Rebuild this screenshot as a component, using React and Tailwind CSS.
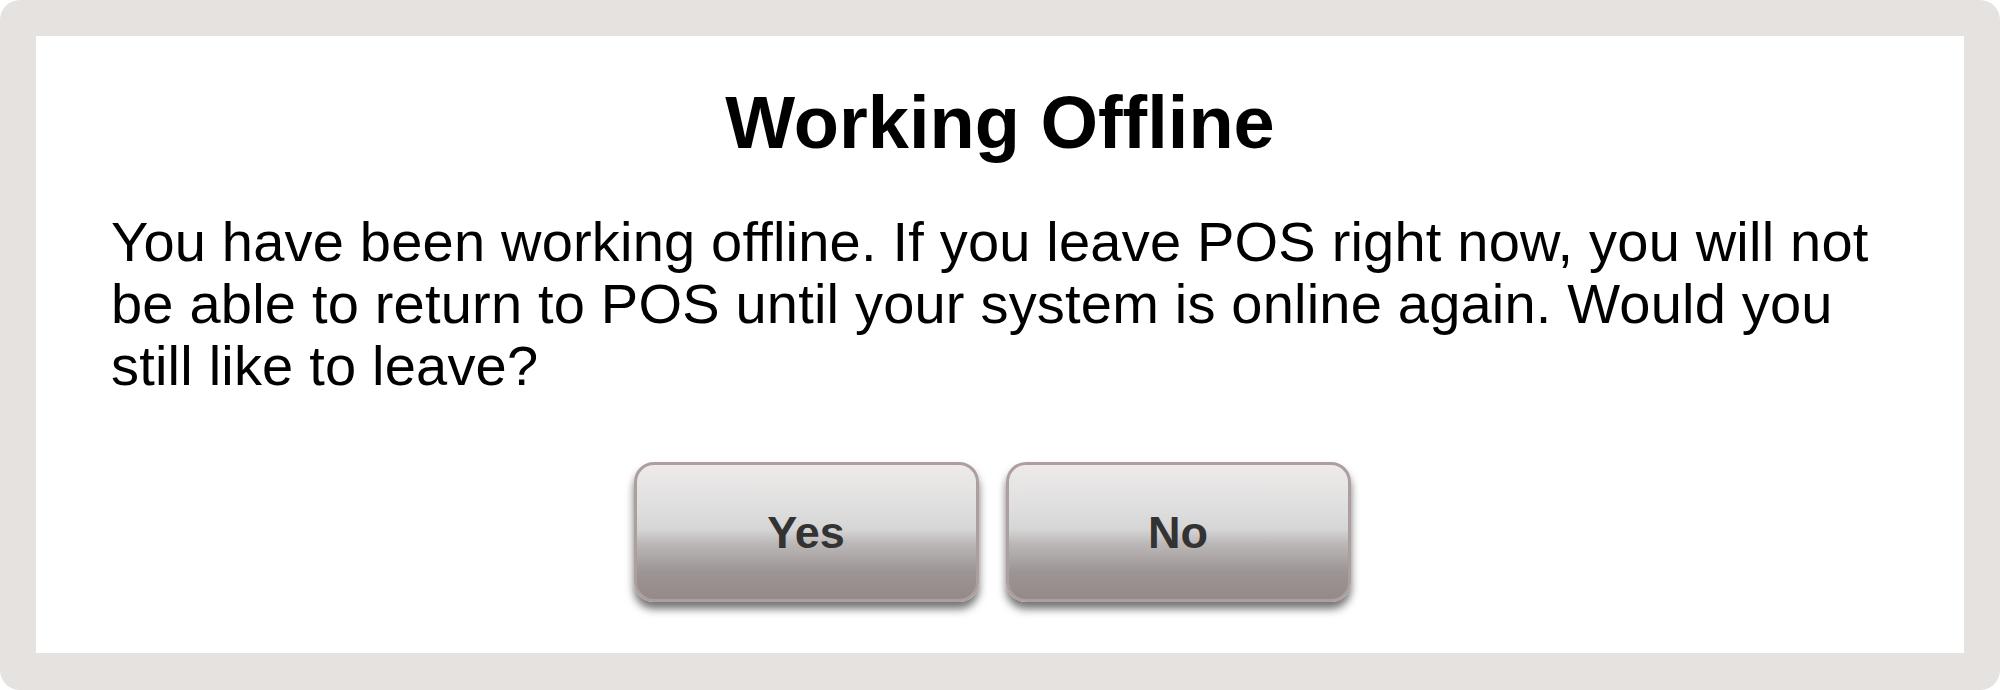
export default function App() {
  const btn =
    "h-[140px] w-[345px] rounded-[20px] border-[3px] border-[#ae9f9f] bg-[linear-gradient(to_bottom,#eeeaea_0%,#dedddd_35%,#d6d5d6_48%,#bdb9b9_58%,#9d9494_80%,#958a8a_100%)] text-[45px] font-bold leading-none text-[#333] shadow-[0_7px_8px_rgba(0,0,0,0.55)]";

  return (
    <div className="h-[690px] w-[2000px] rounded-[20px] bg-[#e6e2df] pt-[36px] pr-[36px] pb-[37px] pl-[36px] font-['Liberation_Sans',Arial,sans-serif]">
      <div className="flex h-full flex-col bg-white pt-[50px] pr-[75px] pl-[75px]">
        <h1 className="text-center text-[74px] font-bold leading-[74px] text-black">Working Offline</h1>
        <p className="mt-[51px] text-[56px] leading-[62px] tracking-[0.2px] text-black">
          You have been working offline. If you leave POS right now, you will not be able to return to POS until
          your system is online again. Would you still like to leave?
        </p>
        <div className="mt-[65px] flex justify-center gap-[27px] pr-[16px]">
          <button className={btn}>Yes</button>
          <button className={btn}>No</button>
        </div>
      </div>
    </div>
  );
}
